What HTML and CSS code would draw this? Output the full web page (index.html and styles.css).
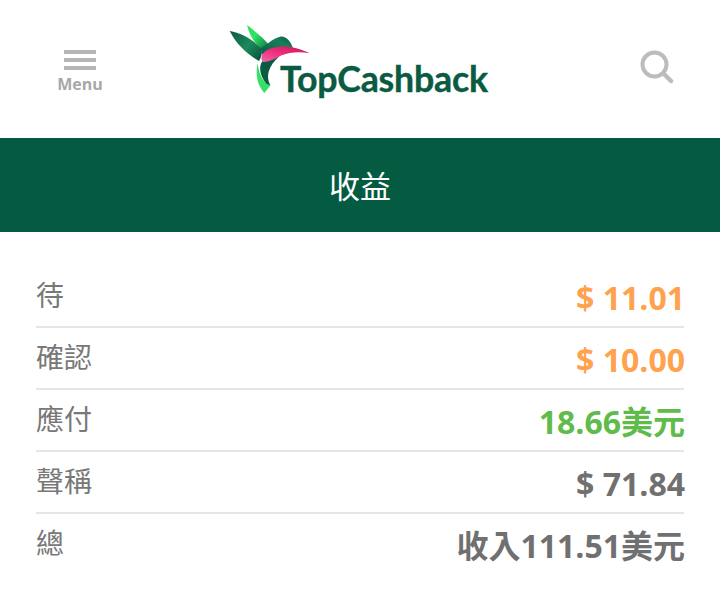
FILE: index.html
```html
<!DOCTYPE html>
<html lang="zh-Hant">
<head>
  <meta charset="UTF-8">
  <meta name="viewport" content="width=device-width, initial-scale=1.0">
  <title>TopCashback</title>
  <link rel="stylesheet" href="styles.css">
</head>
<body>
  <header class="top">
    <div class="menu">
      <div class="bars"><span></span><span></span><span></span></div>
      <div class="menu-label">Menu</div>
    </div>
    <div class="logo">
      <svg class="bird" viewBox="-15 -15 840 285" width="280" height="95">
        <defs>
          <linearGradient id="wingLight" x1="0" y1="0" x2="1" y2="1">
            <stop offset="0.4" stop-color="#2fe362"/>
            <stop offset="1" stop-color="#0c6a48"/>
          </linearGradient>
          <linearGradient id="wingDark" x1="0" y1="0" x2="1" y2="0.8">
            <stop offset="0" stop-color="#0b5a42"/>
            <stop offset="0.6" stop-color="#1c8a5c"/>
            <stop offset="1" stop-color="#0b5a42"/>
          </linearGradient>
          <linearGradient id="head" x1="0" y1="1" x2="1" y2="0">
            <stop offset="0" stop-color="#0b5a42"/>
            <stop offset="0.65" stop-color="#17805a"/>
            <stop offset="1" stop-color="#0b5a42"/>
          </linearGradient>
          <linearGradient id="pink" x1="0" y1="1" x2="1" y2="0">
            <stop offset="0" stop-color="#f560ab"/>
            <stop offset="0.5" stop-color="#ee2a78"/>
            <stop offset="1" stop-color="#c2185b"/>
          </linearGradient>
        </defs>
        <path fill="url(#wingLight)" d="M66 15C86 30 115 55 132 74L110 90C90 70 72 45 66 15Z"/>
        <path fill="url(#wingDark)" d="M14 33C50 38 85 60 108 85C113 100 109 112 102 123C70 105 35 75 14 33Z"/>
        <path fill="url(#head)" d="M106 84C125 78 140 55 165 50C185 48 197 65 204 84C175 80 135 86 112 104Z"/>
        <path fill="#36e066" d="M98 130C90 165 98 197 118 219L137 196C115 190 102 165 98 130Z"/>
        <path fill="#0b5a42" d="M112 124C100 140 105 170 125 192L136 196C122 170 128 140 164 108C145 116 125 126 112 124Z"/>
        <path fill="url(#pink)" d="M110 120C106 100 125 84 160 80C190 77 225 85 254 100C225 94 195 96 170 106C148 118 120 133 110 120Z"/>
      </svg>
      <div class="logo-text">TopCashback</div>
    </div>
    <svg class="search" viewBox="0 0 34 34" width="34" height="34">
      <circle cx="14.5" cy="14.5" r="12" fill="none" stroke="#bcbcbc" stroke-width="4"/>
      <path d="M23.5 23.5L31 31" stroke="#bcbcbc" stroke-width="4.5" stroke-linecap="round"/>
    </svg>
  </header>

  <h1 class="title">收益</h1>

  <div class="rows">
    <div class="row">
      <span class="label">待</span>
      <span class="value pending">$ 11.01</span>
    </div>
    <div class="row">
      <span class="label">確認</span>
      <span class="value pending">$ 10.00</span>
    </div>
    <div class="row">
      <span class="label">應付</span>
      <span class="value payable">18.66美元</span>
    </div>
    <div class="row">
      <span class="label">聲稱</span>
      <span class="value">$ 71.84</span>
    </div>
    <div class="row">
      <span class="label">總</span>
      <span class="value">收入111.51美元</span>
    </div>
  </div>
</body>
</html>
```

FILE: styles.css
```css
* {
  box-sizing: border-box;
}
body {
  margin: 0;
  font-family: 'Open Sans', 'Noto Sans CJK TC', sans-serif;
  background-color: #fff;
  color: #6b6b6b;
}
.top {
  height: 138px;
  display: flex;
  align-items: flex-start;
  padding: 0 46px 0 57px;
}
.menu {
  width: 46px;
  margin-top: 50px;
  display: flex;
  flex-direction: column;
  align-items: center;
}
.bars {
  width: 32px;
  display: flex;
  flex-direction: column;
  gap: 4px;
}
.bars span {
  height: 4px;
  background-color: #b5b5b5;
}
.menu-label {
  margin-top: 4px;
  font-size: 16px;
  line-height: 20px;
  font-weight: 700;
  color: #a8a8a8;
}
.logo {
  position: relative;
  width: 280px;
  height: 95px;
  margin-top: 15px;
  margin-left: 117px;
}
.bird {
  position: absolute;
  top: 0;
  left: 0;
}
.logo-text {
  position: absolute;
  left: 60px;
  top: 41px;
  font-family: 'Lato', sans-serif;
  font-weight: 700;
  font-size: 35.7px;
  line-height: 46px;
  letter-spacing: -0.2px;
  color: #0b5a42;
  -webkit-text-stroke: 0.4px #0b5a42;
}
.search {
  margin-top: 50px;
  margin-left: auto;
}
.title {
  margin: 0;
  height: 94px;
  background-color: #045b41;
  color: #fff;
  font-size: 31px;
  font-weight: 400;
  line-height: 96px;
  text-align: center;
}
.rows {
  padding: 34px 36px 0;
}
.row {
  height: 62px;
  border-bottom: 2px solid #e6e6e6;
  display: flex;
  justify-content: space-between;
  align-items: flex-start;
}
.row:last-child {
  border-bottom: none;
}
.label {
  font-size: 28px;
  line-height: 58px;
  color: #787878;
}
.value {
  font-size: 32px;
  font-weight: 700;
  line-height: 64px;
  margin-right: -1px;
  color: #707070;
}
.pending {
  color: #ffa24d;
}
.payable {
  color: #5fbb4a;
}
```
